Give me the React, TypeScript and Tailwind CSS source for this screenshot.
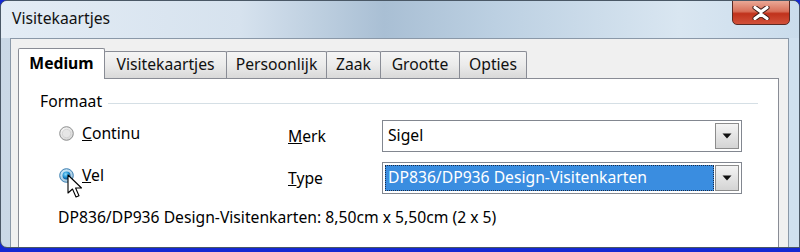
import React from "react";

const font = { fontFamily: '"Noto Sans", "Open Sans", Arial, sans-serif' };

function Radio({ checked }: { checked?: boolean }) {
  return (
    <svg width="15" height="15" viewBox="0 0 15 15" className="shrink-0">
      <defs>
        <radialGradient id={checked ? "rc" : "ru"} cx="40%" cy="35%" r="70%">
          <stop offset="0%" stopColor={checked ? "#d8f0ff" : "#ffffff"} />
          <stop offset="100%" stopColor={checked ? "#9fc4dd" : "#d2d2d2"} />
        </radialGradient>
        <radialGradient id="dot" cx="40%" cy="35%" r="70%">
          <stop offset="0%" stopColor="#8fe0ff" />
          <stop offset="55%" stopColor="#1f8fd0" />
          <stop offset="100%" stopColor="#0b3f7a" />
        </radialGradient>
      </defs>
      <circle cx="7.5" cy="7.5" r="6.8" fill={`url(#${checked ? "rc" : "ru"})`} stroke={checked ? "#3c7fb1" : "#8e8f8f"} strokeWidth="1" />
      {checked ? <circle cx="7.5" cy="7.5" r="4" fill="url(#dot)" /> : <circle cx="7.5" cy="7.5" r="4.2" fill="#e6e6e6" stroke="#c8c8c8" strokeWidth="0.6" />}
    </svg>
  );
}

function DropButton() {
  return (
    <div className="w-[24px] self-stretch my-[2px] mr-[2px] border border-[#8c8c8c] bg-gradient-to-b from-[#f4f4f4] to-[#d4d4d4] flex items-center justify-center">
      <svg width="10" height="6" viewBox="0 0 10 6">
        <path d="M0.5 0.5 L9.5 0.5 L5 5.5 Z" fill="#111" />
      </svg>
    </div>
  );
}

function Combo({ value, selected }: { value: string; selected?: boolean }) {
  return (
    <div className="w-[360px] h-[32px] border border-[#828790] bg-white flex items-stretch">
      <div className="flex-1 flex items-stretch p-[2px] pr-[1px]">
        {selected ? (
          <div className="flex-1 bg-[#3a8de0] text-white flex items-center pl-[2px] border border-dotted border-[#1c2a44]">
            {value}
          </div>
        ) : (
          <div className="flex-1 flex items-center pl-[3px] text-black">{value}</div>
        )}
      </div>
      <DropButton />
    </div>
  );
}

function Cursor() {
  return (
    <svg width="18" height="26" viewBox="0 0 18 26" className="absolute left-[67px] top-[174px]">
      <path
        d="M1 1 L1 19 L5.5 15 L9 23 L12 21.7 L8.6 14 L14.5 14 Z"
        fill="#ffffff"
        stroke="#000000"
        strokeWidth="1.1"
        strokeLinejoin="round"
      />
    </svg>
  );
}

const tabs = [
  { label: "Visitekaartjes", w: 123 },
  { label: "Persoonlijk", w: 101 },
  { label: "Zaak", w: 55 },
  { label: "Grootte", w: 80 },
  { label: "Opties", w: 68 },
];

export default function App() {
  return (
    <div className="w-[800px] h-[252px] bg-[#1428d2] relative overflow-hidden text-[15.7px] text-black" style={font}>
      <div className="h-[248px] w-full rounded-t-[7px] rounded-bl-[7px] border border-[#4a5866] bg-gradient-to-r from-[#c9d8e6] via-[#dbe7f2] to-[#cfe0ef] flex flex-col overflow-hidden">
        {/* title bar */}
        <div className="h-[37px] shrink-0 flex items-start relative bg-[linear-gradient(90deg,#e3ecf5_0%,#d6e2ee_30%,#a9bfd4_48%,#bcd0e2_62%,#d9e6f1_85%,#cadcec_100%)]">
          <div className="pl-[11px] pt-[6px] text-[15.7px] text-[#111]">Visitekaartjes</div>
          <div className="absolute right-[9px] top-[-1px] w-[58px] h-[25px] rounded-b-[5px] border border-[#5a2a24] bg-[linear-gradient(180deg,#e9a896_0%,#d8705a_45%,#c0321c_55%,#d2513a_100%)] flex items-center justify-center">
            <svg width="18" height="14" viewBox="0 0 18 14">
              <path d="M3 1.5 L9 5.8 L15 1.5 M3 12.5 L9 8.2 L15 12.5" stroke="#3a1a16" strokeWidth="5" strokeLinecap="round" fill="none" />
              <path d="M3 1.5 L9 5.8 L15 1.5 M3 12.5 L9 8.2 L15 12.5" stroke="#ffffff" strokeWidth="3.2" strokeLinecap="round" fill="none" />
            </svg>
          </div>
        </div>

        {/* dialog body */}
        <div className="flex-1 ml-[9px] mr-[10px] border border-b-0 border-[#8a98a8] bg-[#f0f0f0] pt-[8px] pl-[7px] pr-[9px] flex flex-col">
          {/* tab strip */}
          <div className="flex items-end h-[31px] relative z-10">
            <div className="w-[87px] h-[31px] -mb-px bg-white border border-b-0 border-[#898c95] rounded-t-[2px] flex items-center justify-center font-bold">
              Medium
            </div>
            {tabs.map((t) => (
              <div
                key={t.label}
                style={{ width: t.w }}
                className="h-[27px] -ml-px first:ml-0 border border-b-0 border-[#898c95] rounded-t-[2px] bg-gradient-to-b from-[#f5f5f5] via-[#ebebeb] to-[#d9d9d9] flex items-center justify-center text-[#111]"
              >
                {t.label}
              </div>
            ))}
          </div>

          {/* tab page */}
          <div className="flex-1 bg-white border border-b-0 border-[#898c95] pl-[21px] pt-[13px] relative">
            <div className="flex items-center h-[20px]">
              <span className="mr-[6px]">Formaat</span>
              <div className="h-px bg-[#d5dfe5] w-[650px] mt-[2px]" />
            </div>

            <div className="grid grid-cols-[229px_94px_360px] items-center pl-[19px] mt-[8px] gap-y-[10px]">
              <div className="flex items-center gap-[8px] -mt-[4px]">
                <Radio />
                <span><span className="underline">C</span>ontinu</span>
              </div>
              <div className="pt-[2px]"><span className="underline">M</span>erk</div>
              <Combo value="Sigel" />

              <div className="flex items-center gap-[8px] -mt-[4px]">
                <Radio checked />
                <span><span className="underline">V</span>el</span>
              </div>
              <div className="pt-[2px]"><span className="underline">T</span>ype</div>
              <Combo value="DP836/DP936 Design-Visitenkarten" selected />
            </div>

            <div className="pl-[18px] mt-[12px]">DP836/DP936 Design-Visitenkarten: 8,50cm x 5,50cm (2 x 5)</div>
          </div>
        </div>
      </div>
      <Cursor />
    </div>
  );
}
